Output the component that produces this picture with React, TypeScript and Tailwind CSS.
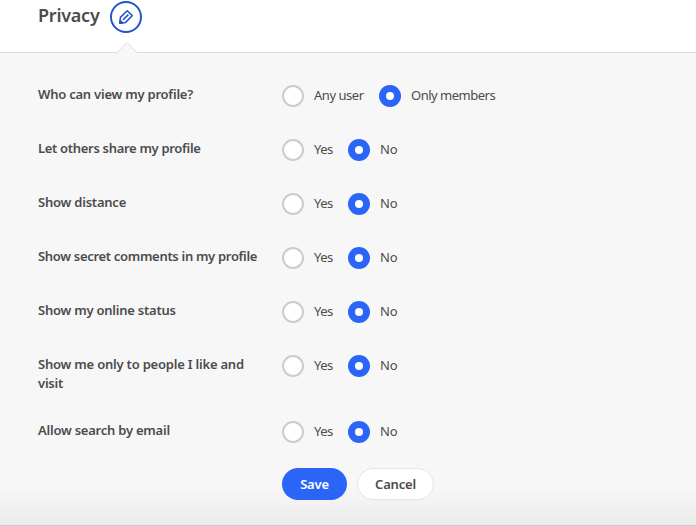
import clsx from "clsx";

type Setting = {
  label: string;
  tracking: string;
  options: { text: string; width: string; className?: string }[];
};

const yesNo = [
  { text: "Yes", width: "w-[66px]", className: "tracking-[-0.5px]" },
  { text: "No", width: "w-[60px]", className: "tracking-[-0.2px]" },
];

const settings: Setting[] = [
  {
    label: "Who can view my profile?",
    tracking: "tracking-[-0.23px]",
    options: [
      { text: "Any user", width: "w-[97px]", className: "tracking-[-0.46px]" },
      { text: "Only members", width: "w-[140px]", className: "tracking-[-0.5px]" },
    ],
  },
  { label: "Let others share my profile", tracking: "tracking-[-0.31px]", options: yesNo },
  { label: "Show distance", tracking: "tracking-[-0.22px]", options: yesNo },
  { label: "Show secret comments in my profile", tracking: "tracking-[-0.31px]", options: yesNo },
  { label: "Show my online status", tracking: "tracking-[-0.23px]", options: yesNo },
  { label: "Show me only to people I like and visit", tracking: "tracking-[-0.21px]", options: yesNo },
  { label: "Allow search by email", tracking: "tracking-[-0.23px]", options: yesNo },
];

const Radio = ({ checked }: { checked: boolean }) => (
  <span
    className={clsx(
      "flex size-[22px] shrink-0 items-center justify-center rounded-full",
      checked ? "bg-[#2b65f8]" : "border-2 border-[#cccccc] bg-white"
    )}
  >
    {checked && <span className="size-2 rounded-full bg-white" />}
  </span>
);

const PencilIcon = () => (
  <svg width="16" height="16" viewBox="0 0 16 16" fill="none" stroke="#2352cf" strokeWidth="1.5" strokeLinejoin="round">
    <path d="M1.8 14.2 2.4 8.4 9.2 1.8 14.3 6.6 7.6 13.4Z" />
    <path d="M5 10.9 10.4 5.6" />
    <path d="M1.8 14.2 2.1 11.4 4.6 13.8Z" fill="#2352cf" />
  </svg>
);

const App = () => {
  return (
    <div className="flex h-[526px] w-[696px] flex-col overflow-hidden bg-white font-['Noto_Sans',sans-serif] text-[#4c4c4c]">
      <header className="relative flex h-[53px] shrink-0 items-start border-b border-[#dddddd] pl-[38px] pt-px">
        <h1 className="w-[72px] whitespace-nowrap text-lg leading-7 font-semibold tracking-[-0.25px]">Privacy</h1>
        <button aria-label="Edit privacy" className="flex size-8 items-center justify-center rounded-full border-2 border-[#2352cf]">
          <PencilIcon />
        </button>
        <svg className="absolute top-[41px] left-[117px]" width="20" height="12" viewBox="0 0 20 12">
          <path d="M0 12V11.5L10 1.5 20 11.5V12Z" fill="#f7f7f7" />
          <path d="M0 11.5 10 1.5 20 11.5" fill="none" stroke="#dddddd" />
        </svg>
      </header>

      <main className="flex flex-1 flex-col border-b border-[#cccccc] bg-[#f7f7f7] bg-linear-to-b from-[#f7f7f7] from-92% to-[#ebebeb] pt-8 pl-[38px]">
        <div className="flex flex-col gap-7">
          {settings.map((setting) => (
            <div key={setting.label} className="flex min-h-[26px] items-start">
              <div className={clsx("w-[244px] shrink-0 pr-5 text-[13px] leading-[19px] font-semibold", setting.tracking)}>
                {setting.label}
              </div>
              {setting.options.map((option, index) => (
                <label key={option.text} className={clsx("flex shrink-0 items-start gap-2.5", option.width)}>
                  <Radio checked={index === 1} />
                  <span className={clsx("whitespace-nowrap text-[13px] leading-5", option.className)}>{option.text}</span>
                </label>
              ))}
            </div>
          ))}
        </div>

        <div className="mt-[21px] ml-[244px] flex gap-2.5 text-[13px] font-semibold tracking-[-0.2px]">
          <button className="h-8 w-[65px] rounded-full bg-[#2b65f8] pt-0.5 text-white">Save</button>
          <button className="h-8 w-[77px] rounded-full border border-[#e6e6e6] bg-white pt-0.5">Cancel</button>
        </div>
      </main>
    </div>
  );
};

export default App;
